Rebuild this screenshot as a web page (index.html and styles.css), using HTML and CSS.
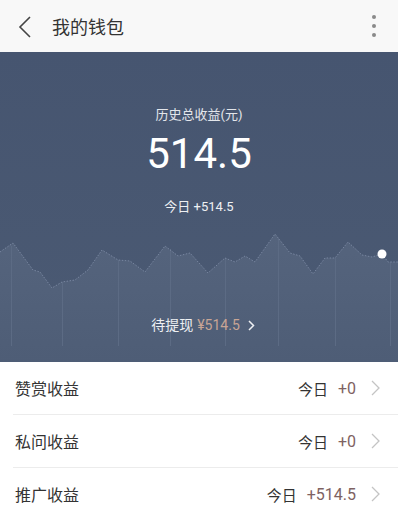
FILE: index.html
```html
<!DOCTYPE html>
<html lang="zh">
<head>
<meta charset="utf-8">
<link rel="stylesheet" href="styles.css">
</head>
<body>
<div class="app">
  <header class="topbar">
    <svg class="back" width="14" height="24" viewBox="0 0 14 24"><path d="M12 2 L2 12 L12 22" fill="none" stroke="#444" stroke-width="1.6"/></svg>
    <span class="title">我的钱包</span>
    <span class="more"><i></i><i></i><i></i></span>
  </header>
  <section class="hero">
    <div class="hero-label">历史总收益(元)</div>
    <div class="hero-num">514.5</div>
    <div class="hero-today">今日 +514.5</div>
    <div class="chart-wrap">
      <svg class="chart" width="398" height="146" viewBox="0 0 398 146">
        <defs>
          <linearGradient id="fill" x1="0" y1="0" x2="0" y2="1">
            <stop offset="0" stop-color="#55647d"/>
            <stop offset="1" stop-color="#4e5d76"/>
          </linearGradient>
        </defs>
        <polygon fill="url(#fill)" points="0,36 13,27 33,54 40,56 52,72 62,66 75,64 88,54 102,34 118,44 130,45 145,56 165,30 178,40 190,37 208,57 225,42 235,46 245,40 255,46 275,18 290,37 300,40 313,58 325,42 335,42 348,26 362,39 372,41 382,38 388,46 398,46 398,146 0,146"/>
        <g stroke="#5c6b84" stroke-width="1">
          <line x1="11.5" y1="30" x2="11.5" y2="130"/>
          <line x1="62.5" y1="66" x2="62.5" y2="130"/>
          <line x1="118.5" y1="44" x2="118.5" y2="130"/>
          <line x1="170.5" y1="33" x2="170.5" y2="130"/>
          <line x1="225.5" y1="42" x2="225.5" y2="130"/>
          <line x1="278.5" y1="22" x2="278.5" y2="130"/>
          <line x1="335.5" y1="42" x2="335.5" y2="130"/>
          <line x1="390.5" y1="46" x2="390.5" y2="130"/>
        </g>
        <polyline fill="none" stroke="#7886a0" stroke-width="1" stroke-dasharray="1.5 1.5" points="0,36 13,27 33,54 40,56 52,72 62,66 75,64 88,54 102,34 118,44 130,45 145,56 165,30 178,40 190,37 208,57 225,42 235,46 245,40 255,46 275,18 290,37 300,40 313,58 325,42 335,42 348,26 362,39 372,41 382,38 388,46 398,46"/>
        <circle cx="382" cy="38" r="4.5" fill="#fff"/>
      </svg>
      <div class="withdraw">待提现 <span class="amt">¥514.5</span> <svg class="wchev" width="7" height="11" viewBox="0 0 7 11"><path d="M1 1 L5.5 5.5 L1 10" fill="none" stroke="#eef0f3" stroke-width="1.5"/></svg></div>
    </div>
  </section>
  <ul class="list">
    <li class="row"><span class="name">赞赏收益</span><span class="today">今日</span><span class="val">+0</span><svg class="chev" width="9" height="16" viewBox="0 0 9 16"><path d="M1 1 L8 8 L1 15" fill="none" stroke="#c4c4c4" stroke-width="1.3"/></svg></li>
    <li class="row"><span class="name">私问收益</span><span class="today">今日</span><span class="val">+0</span><svg class="chev" width="9" height="16" viewBox="0 0 9 16"><path d="M1 1 L8 8 L1 15" fill="none" stroke="#c4c4c4" stroke-width="1.3"/></svg></li>
    <li class="row"><span class="name">推广收益</span><span class="today">今日</span><span class="val">+514.5</span><svg class="chev" width="9" height="16" viewBox="0 0 9 16"><path d="M1 1 L8 8 L1 15" fill="none" stroke="#c4c4c4" stroke-width="1.3"/></svg></li>
  </ul>
</div>
</body>
</html>
```

FILE: styles.css
```css
* { box-sizing: border-box; }
html, body { margin: 0; padding: 0; }
body {
  width: 398px;
  height: 511px;
  overflow: hidden;
  background: #fff;
  font-family: Roboto, "Noto Sans CJK SC", sans-serif;
}
.app { display: flex; flex-direction: column; }
.topbar {
  height: 52px;
  background: #f8f8f8;
  display: flex;
  align-items: center;
  padding-left: 18px;
  padding-right: 22px;
}
.back { display: block; margin-top: 1px; }
.title {
  margin-left: 20px;
  font-size: 18px;
  color: #333;
  flex: 1;
}
.more { display: flex; flex-direction: column; gap: 5px; }
.more i { display: block; width: 4px; height: 4px; border-radius: 50%; background: #8a8a8a; }
.hero {
  height: 310px;
  background: linear-gradient(#465570, #4b5a73);
  display: flex;
  flex-direction: column;
  align-items: center;
  padding-top: 54px;
}
.hero-label { font-size: 13px; line-height: 18px; color: #e3e6eb; }
.hero-num {
  margin-top: 6px;
  font-size: 42px;
  line-height: 48px;
  color: #fff;
}
.hero-today {
  margin-top: 20px;
  font-size: 13px;
  line-height: 18px;
  color: #eef0f3;
}
.chart-wrap {
  width: 398px;
  height: 146px;
  display: grid;
}
.chart, .withdraw { grid-area: 1 / 1; }
.chart { display: block; }
.withdraw {
  align-self: end;
  justify-self: center;
  margin-bottom: 28px;
  font-size: 14px;
  line-height: 18px;
  color: #eef0f3;
  display: flex;
  align-items: center;
  gap: 4px;
  margin-left: 8px;
}
.amt { color: #c8a595; }
.wchev { margin-left: 4px; }
.list { list-style: none; margin: 0; padding: 0; }
.row {
  height: 53px;
  display: flex;
  align-items: center;
  margin-left: 13px;
  padding-left: 2px;
  padding-right: 18px;
  border-bottom: 1px solid #ececec;
  font-size: 16px;
  color: #333;
}
.name { flex: 1; }
.today { color: #333; font-size: 15px; }
.val { margin-left: 10px; color: #7e6262; font-size: 16px; }
.chev { margin-left: 15px; }
```
